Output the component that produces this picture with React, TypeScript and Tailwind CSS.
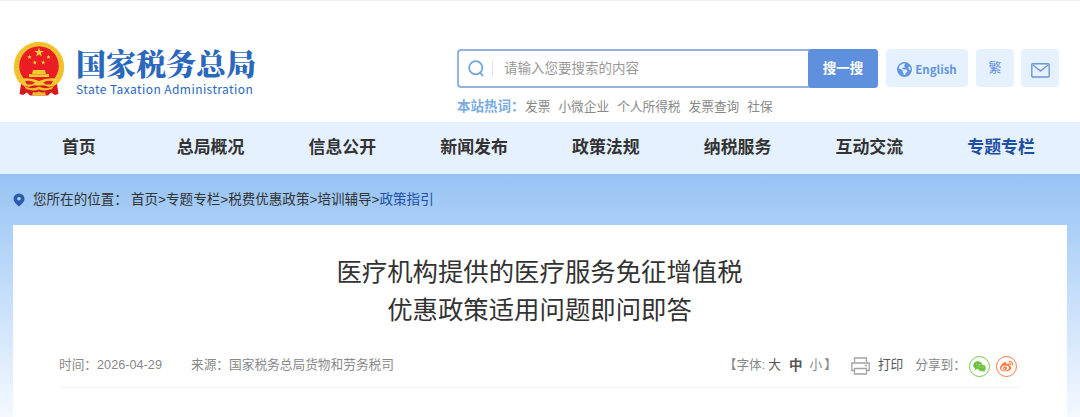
import { FaEarthAmericas, FaWeibo } from "react-icons/fa6";

const NAV = [
  { label: "首页" },
  { label: "总局概况" },
  { label: "信息公开" },
  { label: "新闻发布" },
  { label: "政策法规" },
  { label: "纳税服务" },
  { label: "互动交流" },
  { label: "专题专栏", active: true },
];

const HOT_WORDS = ["发票", "小微企业", "个人所得税", "发票查询", "社保"];

const CRUMBS = ["首页", "专题专栏", "税费优惠政策", "培训辅导"];

const STAR = "M0,-1 L.23,-.31 L.95,-.31 L.36,.12 L.59,.81 L0,.38 L-.59,.81 L-.36,.12 L-.95,-.31 L-.23,-.31 Z";

function Emblem() {
  return (
    <svg viewBox="0 0 52 56" className="w-[52px] h-[56px] shrink-0">
      {/* Wheat ring */}
      <circle cx="26" cy="26" r="25.200" fill="#f2c52f" />
      <circle cx="26" cy="26" r="22.800" fill="none" stroke="#dda51f" strokeWidth=".8" strokeDasharray="1.500 2" />
      <circle cx="26" cy="25" r="19.800" fill="#ea1c24" />
      {/* Stars */}
      <g fill="#f8d535">
        <path d={STAR} transform="translate(26 11.500) scale(5)" />
        <path d={STAR} transform="translate(16.500 16) scale(2.400)" />
        <path d={STAR} transform="translate(35.500 16) scale(2.400)" />
        <path d={STAR} transform="translate(21.800 21.500) scale(2.400)" />
        <path d={STAR} transform="translate(30.200 21.500) scale(2.400)" />
      </g>
      {/* Gate tower */}
      <path d="M20 29 H32 L33 33 H36 V36 H16 V33 H19 Z" fill="#f4c932" />
      <path d="M18 33.500 H34" stroke="#d99a1c" strokeWidth=".7" />
      {/* Red drapes and gear */}
      <path d="M8 43 H44 L45.500 53 L42 54 L38 51.500 L35 54.500 H17 L14 51.500 L10 54 L6.500 53 Z" fill="#d5191e" />
      <path d="M7 38 Q17 36 26 40 Q35 36 45 38 L43 44 Q36 47 32 44.500 H20 Q16 47 9 44 Z" fill="#f4c932" />
      <path d="M12 40 Q18 39 22 41.500 L19 43.500 H14 Z M40 40 Q34 39 30 41.500 L33 43.500 H38 Z" fill="#dc231f" />
      <path d="M11 45 Q19 49 26 45.500 Q33 49 41 45 L39 48 Q32 50.500 26 48.500 Q20 50.500 13 48 Z" fill="#efbd2c" />
      <path d="M20 51 L19 54.500 H33 L32 51 Q29 52 26 50.500 Q23 52 20 51 Z" fill="#efbd2c" />
    </svg>
  );
}

function WechatIcon() {
  return (
    <svg viewBox="0 0 14 12" className="h-[11px] w-[13px]">
      <ellipse cx="5.200" cy="4.600" rx="5" ry="4.300" fill="#6cc13c" />
      <path d="M2 7.500 L1.700 10 L4.500 8.600 Z" fill="#6cc13c" />
      <ellipse cx="9.600" cy="7.500" rx="4.300" ry="3.700" fill="#6cc13c" stroke="#fff" strokeWidth=".3" />
      <path d="M10.500 10.800 L12.500 11.900 L12.300 9.800 Z" fill="#6cc13c" />
      <g fill="#fff">
        <circle cx="3.600" cy="3.600" r=".5" />
        <circle cx="6.900" cy="3.600" r=".5" />
        <circle cx="8.300" cy="6.600" r=".45" />
        <circle cx="11" cy="6.600" r=".45" />
      </g>
    </svg>
  );
}

function Header() {
  return (
    <header className="flex h-[122px] items-start border-t border-[#eeeeee] bg-white">
      <div className="flex w-[457px] shrink-0 pl-[13px] pt-[40px]">
        <Emblem />
        <div className="ml-[11px] pt-0.5 text-[#2a68bd]">
          <p className="whitespace-nowrap font-['Noto_Serif_CJK_SC','Noto_Sans_CJK_SC',serif] text-[30px] font-black leading-[38px]">国家税务总局</p>
          <p className="whitespace-nowrap font-['Noto_Sans_CJK_SC',sans-serif] text-[12px] font-normal leading-[15px] tracking-[0.43px]">State Taxation Administration</p>
        </div>
      </div>

      <div className="pt-[48px]">
        <div className="flex">
          <div className="flex h-[39px] w-[421px] rounded-[4px] border-2 border-r-0 border-[#94b3e4]">
            <div className="flex flex-1 items-center">
              <svg viewBox="0 0 18 18" className="ml-[9px] size-[17px]" fill="none" stroke="#70a5df" strokeWidth="1.800" strokeLinecap="round">
                <circle cx="8.200" cy="8.200" r="7" />
                <path d="M12.500 13 L15.500 16.500" />
              </svg>
              <span className="ml-[7px] h-[17px] w-px bg-[#e2e2e2]" />
              <span className="ml-[11px] pt-px text-[13.5px] text-[#999999]">请输入您要搜索的内容</span>
            </div>
            <button className="-my-0.5 w-[70px] rounded-[4px] bg-[#5f90de] pt-0.5 text-[13.5px] font-bold text-white">搜一搜</button>
          </div>
          <button className="ml-2 flex h-[38px] w-[82px] items-center justify-center gap-[3px] rounded-[4px] bg-[#e5f1ff] pt-[3px] font-['Noto_Sans_CJK_SC',sans-serif] text-[11.5px] font-bold text-[#6394df]">
            <FaEarthAmericas size={15} />
            English
          </button>
          <button className="ml-2 h-[38px] w-[38px] rounded-[4px] bg-[#e5f1ff] text-[13px] text-[#6394df]">繁</button>
          <button className="ml-[7px] flex h-[38px] w-[38px] items-center justify-center rounded-[4px] bg-[#e5f1ff] pt-1">
            <svg viewBox="0 0 19 15" className="h-[15px] w-[19px]" fill="none" stroke="#6c97d8" strokeWidth="1.400">
              <rect x=".8" y=".8" width="17.400" height="13.200" rx="1" />
              <path d="M2 2 L9.500 8 L17 2" />
            </svg>
          </button>
        </div>

        <div className="mt-[9px] flex whitespace-nowrap text-[12.7px] leading-5 text-[#888888]">
          <span className="w-[68px] text-[13.5px] font-bold text-[#7aacdf]">本站热词：</span>
          {HOT_WORDS.map((word) => (
            <span key={word} className="mr-[8px]">{word}</span>
          ))}
        </div>
      </div>
    </header>
  );
}

function Article() {
  return (
    <main className="mx-[13px] h-[192px] bg-white px-[46px] pt-[28px]">
      <h1 className="-ml-px text-center text-[25.4px] leading-[38px] text-[#333333]">
        医疗机构提供的医疗服务免征增值税
        <br />
        优惠政策适用问题即问即答
      </h1>

      <div className="mt-[15px] flex h-[44px] items-center whitespace-nowrap border-b border-[#f5f5f5] pt-px text-[12.7px] text-[#888888]">
        <span className="w-[132px]">时间：2026-04-29</span>
        <span>来源：国家税务总局货物和劳务税司</span>
        <span className="ml-auto">【字体:</span>
        <span className="ml-[3px] text-[#555555]">大</span>
        <span className="ml-2 text-[13.5px] font-bold text-[#555555]">中</span>
        <span className="ml-[7px]">小</span>
        <span className="ml-[2px]">】</span>
        <svg viewBox="0 0 19 18" className="ml-[14px] h-[18px] w-[19px]" fill="none" stroke="#a3a3a3" strokeWidth="1.300">
          <path d="M3.500 5.500 V1 H15.500 V5.500" />
          <path d="M3.500 13.500 H.8 V6 H18.200 V13.500 H15.500" />
          <path d="M3.500 11.500 H15.500 V17 H3.500 Z" />
          <path d="M14 8.500 H16" />
        </svg>
        <span className="ml-[8px] text-[#555555]">打印</span>
        <span className="ml-[12px]">分享到：</span>
        <span className="ml-[3px] flex size-[21px] items-center justify-center rounded-full border border-[#7bc549]">
          <WechatIcon />
        </span>
        <span className="ml-[6px] mr-[4px] flex size-[21px] items-center justify-center rounded-full border border-[#ff763b] text-[#ff763b]">
          <FaWeibo size={13} />
        </span>
      </div>
    </main>
  );
}

export default function App() {
  return (
    <div className="h-[417px] w-[1080px] overflow-hidden bg-white font-['Liberation_Sans','Noto_Sans_CJK_SC',sans-serif]">
      <Header />

      <nav className="flex h-[52px] bg-[#e5f1ff] px-[13px]">
        {NAV.map(({ label, active }) => (
          <a key={label} className={`flex-1 text-center text-[16.9px] font-bold leading-[52px] ${active ? "text-[#1f4fa3]" : "text-[#333333]"}`}>
            {label}
          </a>
        ))}
      </nav>

      <div className="h-[243px] bg-linear-to-b from-[#97c3f4] to-[#f5f9ff]">
        <div className="flex h-[51px] items-center whitespace-nowrap pl-[13px] pt-px text-[13.55px] text-[#333333]">
          <svg viewBox="0 0 12 14" className="mr-2 h-[14px] w-[12px]">
            <path d="M6 .5 A5.500 5.500 0 0 1 11.500 6 C11.500 9 8 11.500 6 13.500 C4 11.500 .5 9 .5 6 A5.500 5.500 0 0 1 6 .5 Z" fill="#2b5bab" />
            <circle cx="6" cy="5.800" r="1.800" fill="#b3d3f7" />
          </svg>
          <span className="w-[98px]">您所在的位置：</span>
          {CRUMBS.map((crumb) => (
            <span key={crumb}>{crumb}&gt;</span>
          ))}
          <span className="text-[#1f4fa3]">政策指引</span>
        </div>
        <Article />
      </div>
    </div>
  );
}
